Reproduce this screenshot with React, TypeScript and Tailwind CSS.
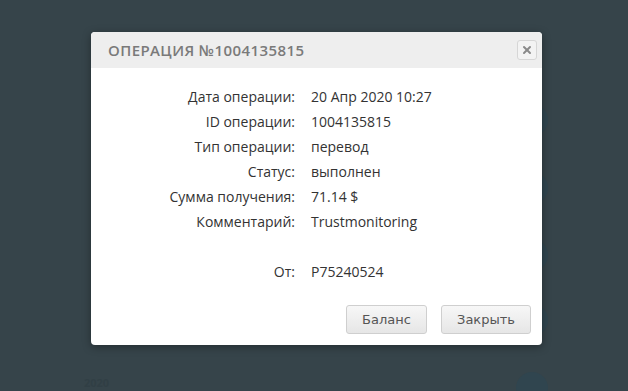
import { X } from 'lucide-react';

const ROWS: { label: string; value: string }[] = [
  { label: 'Дата операции:', value: '20 Апр 2020 10:27' },
  { label: 'ID операции:', value: '1004135815' },
  { label: 'Тип операции:', value: 'перевод' },
  { label: 'Статус:', value: 'выполнен' },
  { label: 'Сумма получения:', value: '71.14 $' },
  { label: 'Комментарий:', value: 'Trustmonitoring' },
  { label: '', value: '' },
  { label: 'От:', value: 'P75240524' },
];

const BG_DOTS = [120, 188, 255, 320, 388];

export default function App() {
  return (
    <div className="relative h-[391px] w-[628px] overflow-hidden bg-[#36444a] font-['Open_Sans',sans-serif]">
      {/* page behind the overlay */}
      {BG_DOTS.map((y) => (
        <div
          key={y}
          className="absolute left-[516px] h-[32px] w-[32px] rounded-full bg-[#30454f]"
          style={{ top: y - 16 }}
        />
      ))}
      <div className="absolute left-[84px] top-[376px] text-[11px] font-bold leading-[14px] text-[#313f45]">2020</div>

      <div className="relative pl-[91px] pt-[32px]">
        <div className="w-[451px] overflow-hidden rounded-[4px] bg-white shadow-[0_2px_8px_rgba(0,0,0,0.35)]">
          <div className="flex h-[36px] items-center justify-between bg-[#eeeeee] pl-[17px] pr-[5px]">
            <h2 className="text-[15px] font-semibold tracking-[0.4px] text-[#7a7a7a]">ОПЕРАЦИЯ №1004135815</h2>
            <button
              type="button"
              className="flex h-[20px] w-[20px] items-center justify-center rounded-[3px] border border-[#d6d6d6] bg-[#f3f3f3] text-[#8a8a8a]"
            >
              <X className="h-3 w-3" strokeWidth={4} />
            </button>
          </div>

          <div className="grid grid-cols-[204px_1fr] gap-x-[16px] pt-[16px] text-[14px] text-[#333]">
            {ROWS.map((r, i) => (
              <div key={i} className="contents">
                <div className="flex h-[25px] items-center justify-end">{r.label}</div>
                <div className="flex h-[25px] items-center">{r.value}</div>
              </div>
            ))}
          </div>

          <div className="flex justify-end gap-[14px] pb-[11px] pr-[11px] pt-[21px] font-['DejaVu_Sans',sans-serif] text-[13px] text-[#555]">
            <button
              type="button"
              className="h-[29px] w-[81px] rounded-[3px] border border-[#cfcfcf] bg-gradient-to-b from-[#f7f7f7] to-[#e6e6e6]"
            >
              Баланс
            </button>
            <button
              type="button"
              className="h-[29px] w-[90px] rounded-[3px] border border-[#cfcfcf] bg-gradient-to-b from-[#f7f7f7] to-[#e6e6e6]"
            >
              Закрыть
            </button>
          </div>
        </div>
      </div>
    </div>
  );
}
